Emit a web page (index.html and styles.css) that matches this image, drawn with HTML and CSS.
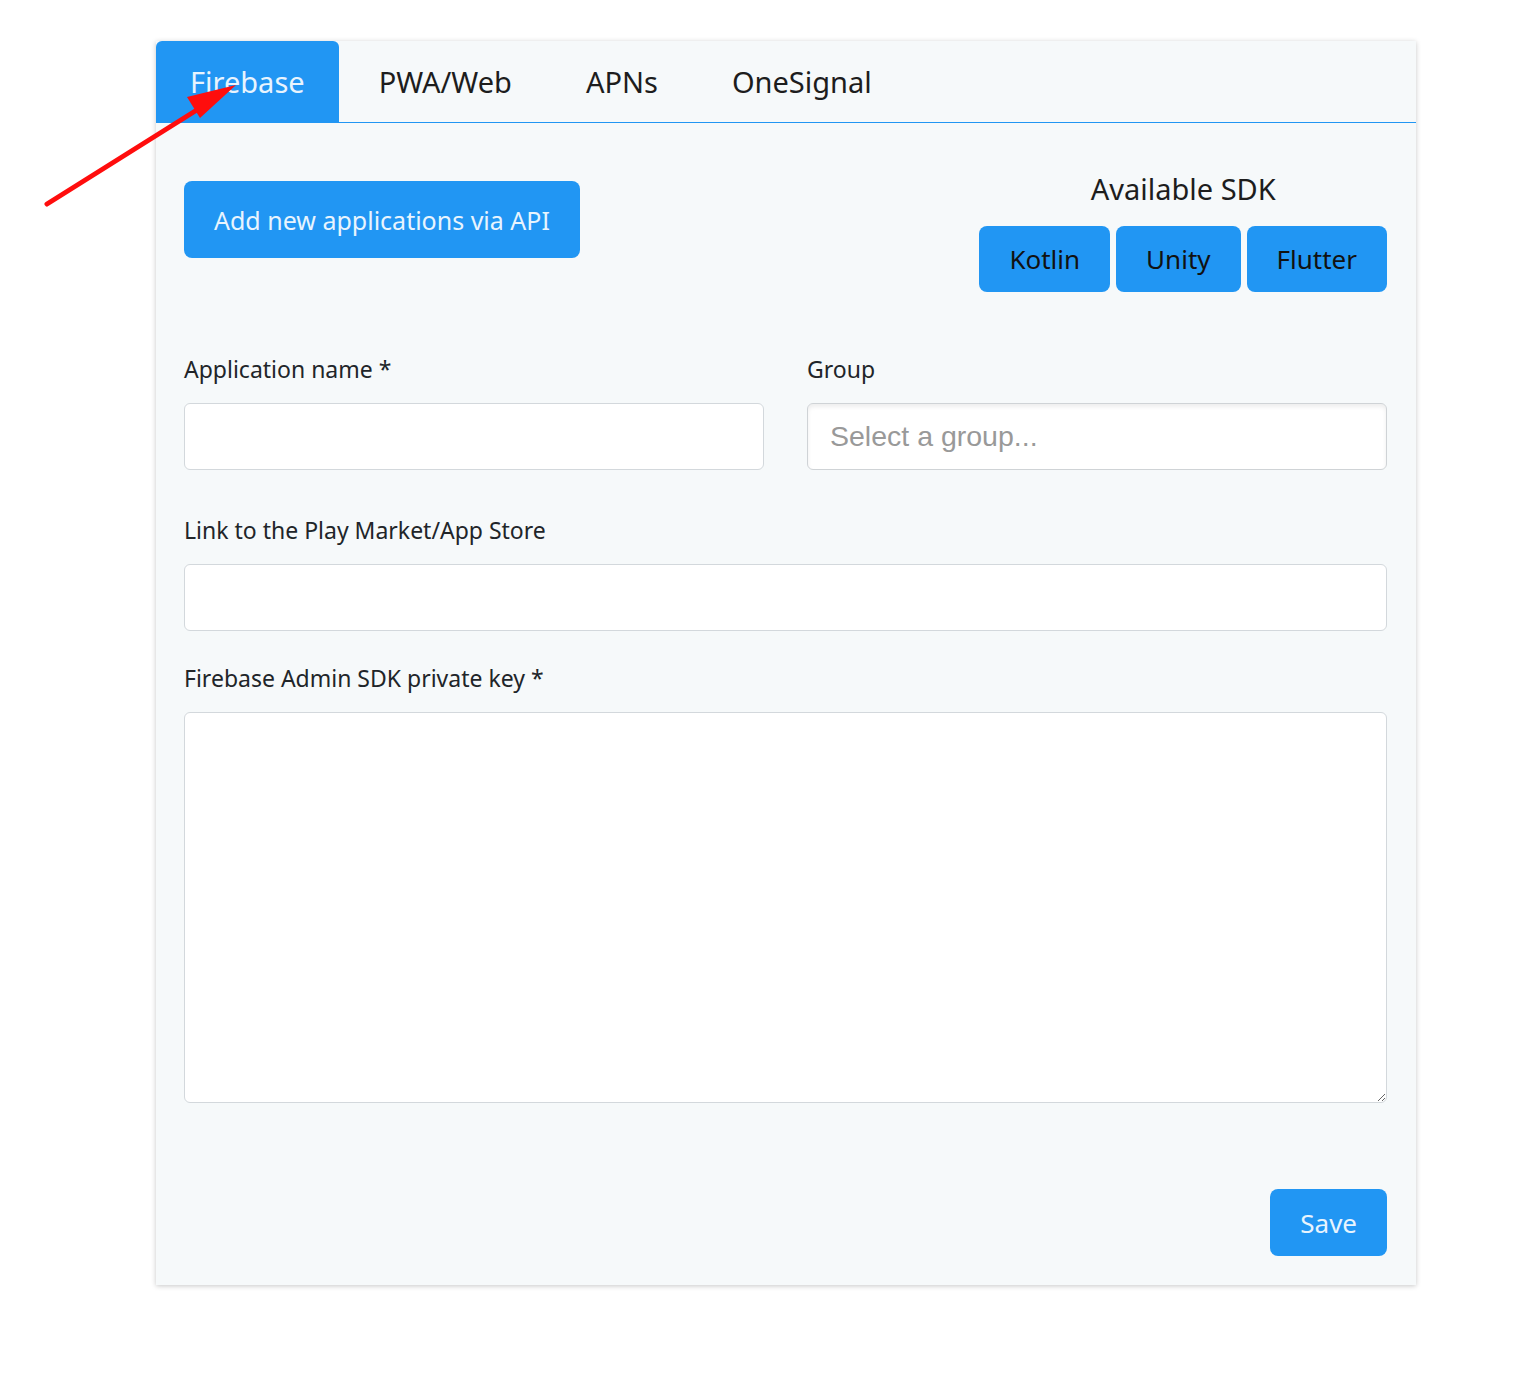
FILE: index.html
```html
<!DOCTYPE html>
<html lang="en">
<head>
  <meta charset="UTF-8">
  <title>Applications</title>
  <link rel="stylesheet" href="styles.css">
</head>
<body>
  <div class="page">
    <div class="card">
      <div class="tabs">
        <a href="#" class="tab active">Firebase</a>
        <a href="#" class="tab">PWA/Web</a>
        <a href="#" class="tab">APNs</a>
        <a href="#" class="tab">OneSignal</a>
      </div>
      <div class="card-body">
        <div class="top-row">
          <button class="btn btn-api">Add new applications via API</button>
          <div class="sdk">
            <h3>Available SDK</h3>
            <div class="sdk-buttons">
              <button class="btn btn-sdk">Kotlin</button>
              <button class="btn btn-sdk">Unity</button>
              <button class="btn btn-sdk">Flutter</button>
            </div>
          </div>
        </div>

        <div class="form-row">
          <div class="field">
            <label>Application name *</label>
            <input type="text" class="input">
          </div>
          <div class="field">
            <label>Group</label>
            <div class="select">Select a group...</div>
          </div>
        </div>

        <div class="field field-link">
          <label>Link to the Play Market/App Store</label>
          <input type="text" class="input">
        </div>

        <div class="field">
          <label>Firebase Admin SDK private key *</label>
          <textarea class="input textarea"></textarea>
        </div>

        <div class="actions">
          <button class="btn btn-save">Save</button>
        </div>
      </div>
    </div>
  </div>

  <!-- annotation arrow -->
  <svg class="arrow" width="260" height="240" viewBox="0 0 260 240">
    <line x1="47" y1="204" x2="200" y2="108" stroke="#ff0d0d" stroke-width="5" stroke-linecap="round"/>
    <polygon points="236,85 187,97 200,118" fill="#ff0d0d"/>
  </svg>
</body>
</html>
```

FILE: styles.css
```css
body {
  margin: 0;
  background: #fff;
  font-family: "Noto Sans", sans-serif;
  color: #212529;
}
.page {
  padding: 41px 0 100px 156px;
}
.card {
  width: 1260px;
  background: #f6f9fa;
  box-shadow: 0 1px 5px rgba(0, 0, 0, 0.22);
}
.tabs {
  display: flex;
  gap: 6px;
  height: 81px;
  border-bottom: 1px solid #2196f3;
}
.tab {
  display: flex;
  align-items: center;
  padding: 0 34px;
  font-size: 29px;
  color: #1d1d1d;
  text-decoration: none;
  border-radius: 6px 6px 0 0;
}
.tab.active {
  background: #2196f3;
  color: #e8f4fe;
}
.card-body {
  padding: 44px 29px 29px 28px;
}
.top-row {
  display: flex;
  justify-content: space-between;
  align-items: flex-start;
}
.btn {
  font-family: inherit;
  border: none;
  background: #2196f3;
  border-radius: 8px;
  cursor: pointer;
}
.btn-api {
  margin-top: 14px;
  height: 77px;
  padding: 0 30px;
  font-size: 25px;
  color: #e8f4fe;
}
.sdk {
  display: flex;
  flex-direction: column;
  align-items: center;
}
.sdk h3 {
  margin: 0 0 15px;
  font-size: 29px;
  font-weight: normal;
  line-height: 44px;
  color: #1d1d1d;
}
.sdk-buttons {
  display: flex;
  gap: 6px;
}
.btn-sdk {
  height: 66px;
  padding: 0 30px;
  font-size: 26px;
  color: #111;
}
.form-row {
  display: grid;
  grid-template-columns: 1fr 1fr;
  gap: 43px;
  margin-top: 61px;
  margin-bottom: 10px;
}
.field {
  display: flex;
  flex-direction: column;
  margin-bottom: 34px;
}
.field-link {
  margin-bottom: 31px;
}
.field label {
  font-size: 23px;
  line-height: 32px;
  margin-bottom: 18px;
}
.input {
  box-sizing: border-box;
  height: 67px;
  border: 1px solid #d3d8dc;
  border-radius: 6px;
  background: #fff;
  font-family: inherit;
  font-size: 24px;
}
.select {
  box-sizing: border-box;
  height: 67px;
  border: 1px solid #cfd3d6;
  border-radius: 6px;
  background: #fff;
  box-shadow: inset 0 3px 4px rgba(0, 0, 0, 0.07);
  padding: 0 22px;
  display: flex;
  align-items: center;
  font-family: "Liberation Sans", Arial, sans-serif;
  font-size: 28.5px;
  color: #999;
}
.textarea {
  height: 391px;
  resize: vertical;
}
.actions {
  display: flex;
  justify-content: flex-end;
  margin-top: 86px;
}
.btn-save {
  height: 67px;
  padding: 0 30px;
  font-size: 26px;
  color: #e8f4fe;
}
.arrow {
  position: absolute;
  left: 0;
  top: 0;
}
```
